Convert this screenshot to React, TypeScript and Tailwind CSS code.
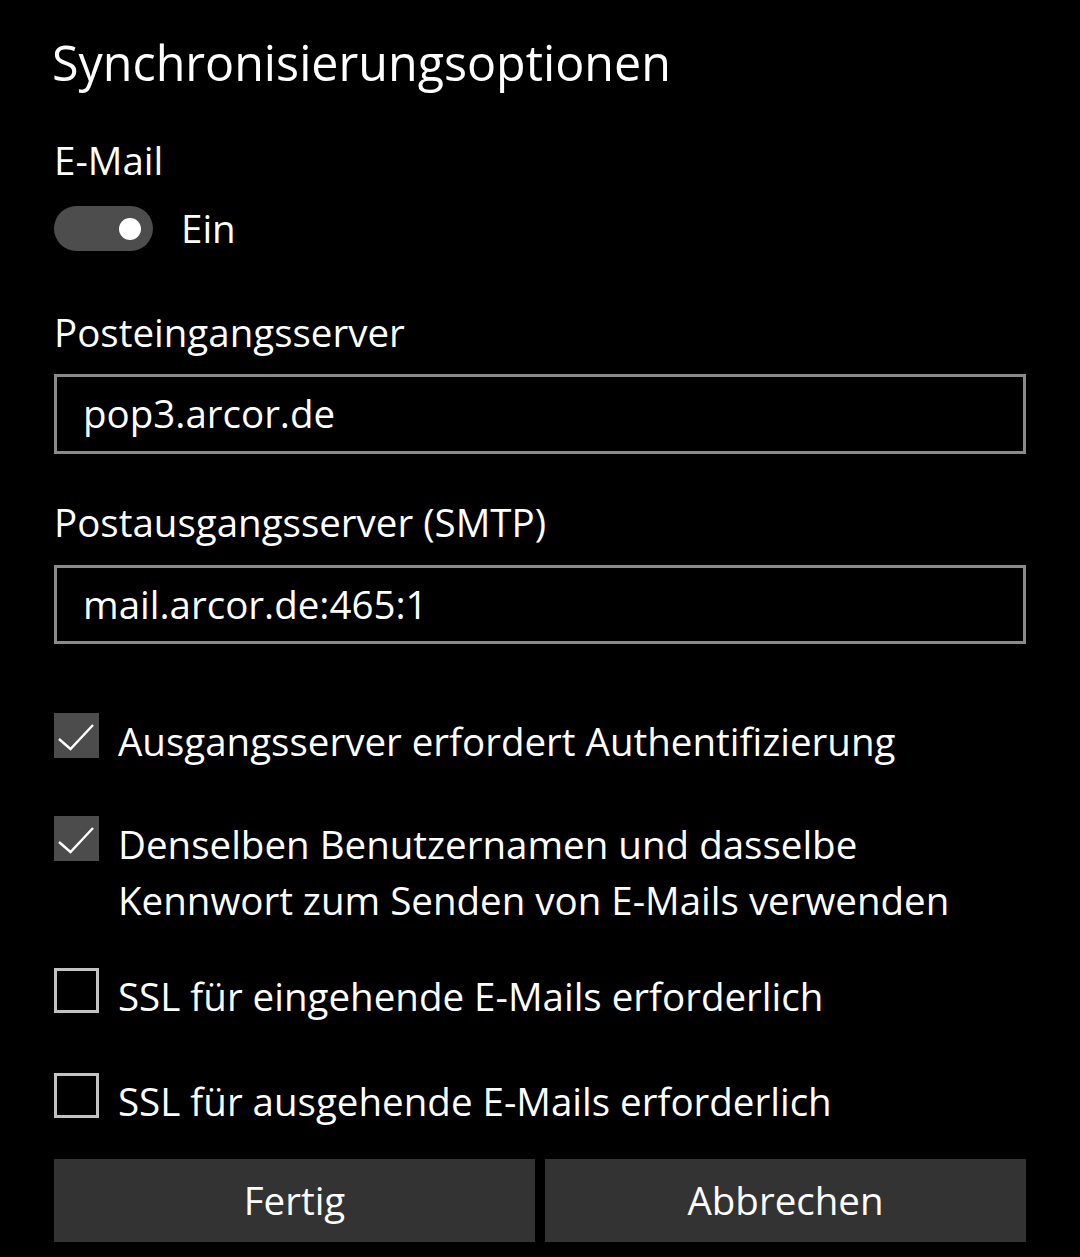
import React, { useState } from "react";

const font = { fontFamily: '"Open Sans", "Noto Sans", sans-serif' };

const Check = ({ checked, onClick }: { checked: boolean; onClick: () => void }) => (
  <button
    onClick={onClick}
    className={`w-[45px] h-[45px] shrink-0 flex items-center justify-center ${
      checked ? "bg-[#4c4c4c]" : "border-[3px] border-[#c2c2c2]"
    }`}
  >
    {checked && (
      <svg width="45" height="45" viewBox="0 0 45 45" fill="none">
        <path d="M5 26 L16.5 36 L39 12" stroke="white" strokeWidth="2.4" />
      </svg>
    )}
  </button>
);

const App = () => {
  const [mail, setMail] = useState(true);
  const [opts, setOpts] = useState([true, true, false, false]);

  const toggle = (i: number) => setOpts(opts.map((v, j) => (j === i ? !v : v)));

  return (
    <div className="min-h-screen bg-black text-white px-[54px]" style={font}>
      <div className="pt-[32px] h-[92px] -ml-[2px] text-[48.4px] leading-[60px]">
        Synchronisierungsoptionen
      </div>

      <div className="mt-[43px] h-[50px] text-[38.5px] leading-[50px]">E-Mail</div>

      <div className="mt-[21px] flex items-center h-[45px]">
        <button
          onClick={() => setMail(!mail)}
          className="w-[99px] h-[45px] rounded-full bg-[#4d4d4d] flex items-center justify-end pr-[12px]"
        >
          <span className="w-[22px] h-[22px] rounded-full bg-white" />
        </button>
        <span className="ml-[28px] text-[38.5px] leading-[45px]">{mail ? "Ein" : "Aus"}</span>
      </div>

      <div className="mt-[56px] h-[50px] text-[38.5px] leading-[50px]">Posteingangsserver</div>
      <div className="mt-[17px] h-[80px] border-[3px] border-[#8a8a8a] flex items-center pl-[26px] text-[38.5px]">
        pop3.arcor.de
      </div>

      <div className="mt-[43px] h-[50px] text-[38.5px] leading-[50px]">Postausgangsserver (SMTP)</div>
      <div className="mt-[18px] h-[79px] border-[3px] border-[#8a8a8a] flex items-center pl-[26px] text-[38.5px]">
        mail.arcor.de:465:1
      </div>

      <div className="mt-[69px] flex items-start gap-[19px]">
        <Check checked={opts[0]} onClick={() => toggle(0)} />
        <span className="text-[38.5px] leading-[56px]">Ausgangsserver erfordert Authentifizierung</span>
      </div>

      <div className="mt-[47px] flex items-start gap-[19px]">
        <Check checked={opts[1]} onClick={() => toggle(1)} />
        <span className="text-[38.5px] leading-[56px]">
          Denselben Benutzernamen und dasselbe
          <br />
          Kennwort zum Senden von E-Mails verwenden
        </span>
      </div>

      <div className="mt-[40px] flex items-start gap-[19px]">
        <Check checked={opts[2]} onClick={() => toggle(2)} />
        <span className="text-[38.5px] leading-[56px]">SSL für eingehende E-Mails erforderlich</span>
      </div>

      <div className="mt-[49px] flex items-start gap-[19px]">
        <Check checked={opts[3]} onClick={() => toggle(3)} />
        <span className="text-[38.5px] leading-[56px]">SSL für ausgehende E-Mails erforderlich</span>
      </div>

      <div className="mt-[30px] grid grid-cols-2 gap-[10px]">
        <button className="h-[83px] bg-[#333333] text-[38.5px]">Fertig</button>
        <button className="h-[83px] bg-[#333333] text-[38.5px]">Abbrechen</button>
      </div>
    </div>
  );
};

export default App;
